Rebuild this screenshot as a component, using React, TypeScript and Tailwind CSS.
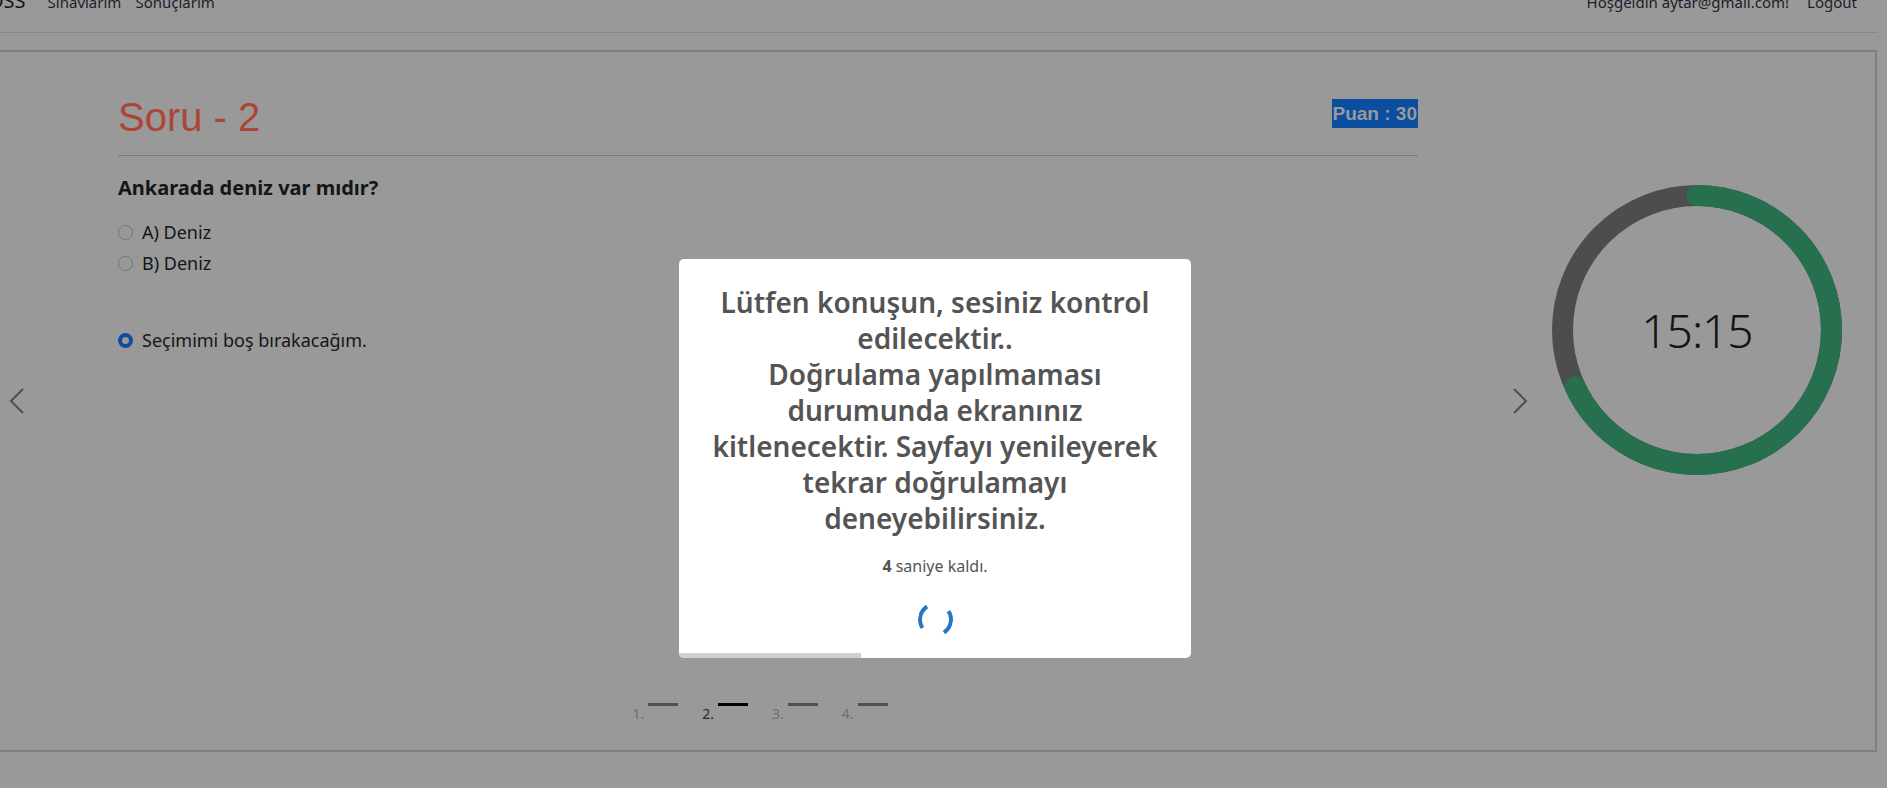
export default function App() {
  const options = ["A) Deniz", "B) Deniz"];
  const steps = [1, 2, 3, 4];

  // timer ring
  const size = 290;
  const stroke = 21;
  const r = (size - stroke) / 2;
  const c = 2 * Math.PI * r;
  const done = 0.68;

  return (
    <div className="w-[1887px] h-[788px] bg-[#999999] overflow-hidden relative font-['Noto_Sans',sans-serif]">

      {/* Navbar */}
      <nav className="w-[1878px] h-[33px] border-b border-[#878787] overflow-hidden">
        <div className="-mt-[10px] flex items-start">
          <span className="ml-[-12px] text-[20px] leading-[28px] mt-[-3px] text-[#141414]">
            OSS
          </span>
          <div className="flex gap-[14px] ml-[22px] text-[15px] leading-[24px] text-[#1b1e2a]">
            <span>Sınavlarım</span>
            <span>Sonuçlarım</span>
          </div>
          <div className="ml-auto mr-[21px] flex gap-[18px] text-[15px] leading-[24px] text-[#1b1e2a]">
            <span>Hoşgeldin aytar@gmail.com!</span>
            <span>Logout</span>
          </div>
        </div>
      </nav>

      {/* Exam box */}
      <div className="mt-[17px] ml-[-4px] w-[1881px] h-[702px] border-2 border-[#7f7f7f] flex">

        {/* prev */}
        <div className="w-[120px] flex items-center">
          <svg width="16" height="28" viewBox="0 0 16 28" className="ml-[11px]">
            <path d="M14 2 L2 14 L14 26" fill="none" stroke="#505050" strokeWidth="2" />
          </svg>
        </div>

        {/* question */}
        <div className="w-[1300px] flex flex-col pt-[41px] pb-[26px]">
          <div className="flex items-start justify-between">
            <h1 className="font-['Liberation_Sans',sans-serif] text-[40px] leading-[48px] text-[#ad4537]">
              Soru - 2
            </h1>
            <span className="mt-[6px] h-[29px] bg-[#0b4d9e] text-[#9a9a9a] font-['Liberation_Sans',sans-serif] font-bold text-[19px] leading-[29px] px-[1px]">
              Puan : 30
            </span>
          </div>
          <div className="mt-[14px] h-px bg-[#7b7b7b]" />

          <p className="mt-[18px] text-[20px] leading-[27px] font-bold text-[#141618]">
            Ankarada deniz var mıdır?
          </p>

          <div className="mt-[16px] flex flex-col">
            {options.map((o) => (
              <label key={o} className="h-[31px] flex items-center gap-[9px] text-[18px] text-[#141618]">
                <span className="w-[15px] h-[15px] rounded-full border border-[#767676] bg-[#999999]" />
                {o}
              </label>
            ))}
          </div>

          <label className="mt-[46px] h-[31px] flex items-center gap-[9px] text-[18px] text-[#141618]">
            <span className="w-[15px] h-[15px] rounded-full border-[4px] border-[#0b4d9e] bg-[#999999]" />
            Seçimimi boş bırakacağım.
          </label>

          {/* steps */}
          <div className="mt-auto flex justify-center gap-[24px] pr-[16px]">
            {steps.map((s) => (
              <div key={s} className="flex items-start">
                <span
                  className={
                    s === 2
                      ? "mt-[1px] text-[14px] leading-[20px] text-[#2a2a2a]"
                      : "mt-[1px] text-[14px] leading-[20px] text-[#6e6e6e]"
                  }
                >
                  {s}.
                </span>
                <span
                  className={
                    s === 2
                      ? "ml-[4px] w-[30px] h-[3px] bg-black"
                      : "ml-[4px] w-[30px] h-[3px] bg-[#505050]"
                  }
                />
              </div>
            ))}
          </div>
        </div>

        {/* next */}
        <div className="w-[134px] flex items-center">
          <svg width="16" height="28" viewBox="0 0 16 28" className="ml-[94px]">
            <path d="M2 2 L14 14 L2 26" fill="none" stroke="#505050" strokeWidth="2" />
          </svg>
        </div>

        {/* timer */}
        <div className="w-[290px] mt-[133px]">
          <div className="relative w-[290px] h-[290px] flex items-center justify-center">
            <svg width={size} height={size} className="absolute inset-0 -rotate-90">
              <circle cx={size / 2} cy={size / 2} r={r} fill="none" stroke="#4d4d4d" strokeWidth={stroke} />
              <circle
                cx={size / 2}
                cy={size / 2}
                r={r}
                fill="none"
                stroke="#27704f"
                strokeWidth={stroke}
                strokeLinecap="round"
                strokeDasharray={`${c * done} ${c}`}
              />
            </svg>
            <span className="relative text-[46px] font-light tracking-[-1px] text-[#141414]">
              15:15
            </span>
          </div>
        </div>
      </div>

      {/* Modal */}
      <div className="absolute left-[679px] top-[259px] w-[512px] h-[399px] bg-white rounded-[5px] overflow-hidden flex flex-col items-center text-[#545454]">
        <h2 className="mt-[25px] text-[28px] leading-[36px] font-semibold text-center whitespace-nowrap">
          Lütfen konuşun, sesiniz kontrol<br />
          edilecektir..<br />
          Doğrulama yapılmaması<br />
          durumunda ekranınız<br />
          kitlenecektir. Sayfayı yenileyerek<br />
          tekrar doğrulamayı<br />
          deneyebilirsiniz.
        </h2>
        <p className="mt-[18px] text-[16px] leading-[24px]">
          <b>4</b> saniye kaldı.
        </p>
        <div className="mt-[24px] w-[35px] h-[35px] rounded-full border-4 border-[#2778c4] border-t-transparent border-b-transparent rotate-[12deg]" />
        <div className="absolute left-0 bottom-0 w-[182px] h-[5px] bg-[#d0d0d0]" />
      </div>
    </div>
  );
}
